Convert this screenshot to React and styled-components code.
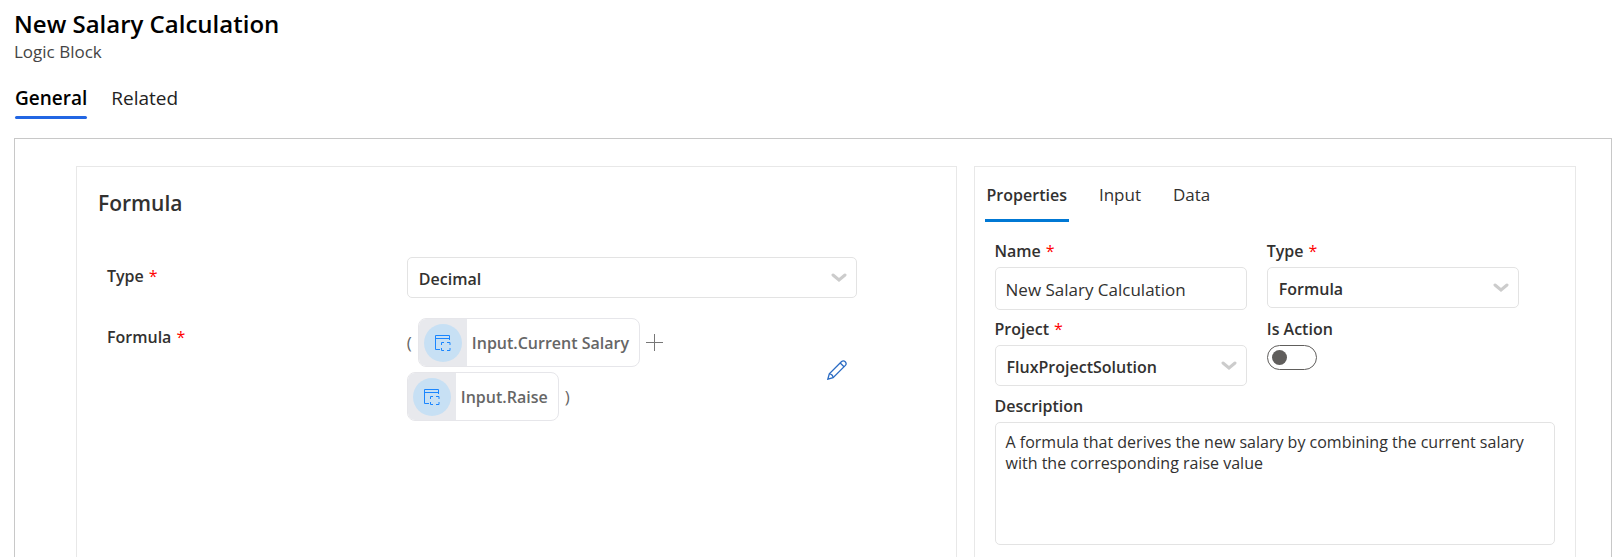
import React, { useState } from "react";
import styled, { createGlobalStyle } from "styled-components";

const GlobalStyle = createGlobalStyle`
  * {
    box-sizing: border-box;
  }

  body {
    margin: 0;
    background: #fff;
    color: #323130;
    font-family: "Segoe UI", "Open Sans", "Noto Sans", sans-serif;
    font-size: 17px;
    line-height: 22px;
  }

  button, input, select, textarea {
    font: inherit;
    color: inherit;
  }
`;

const Page = styled.div`
  display: flex;
  flex-direction: column;
  min-height: 100vh;
  padding: 8px 9px 0 14px;
`;

const Title = styled.h1`
  margin: 0;
  color: #000;
  font-size: 24px;
  font-weight: 600;
  line-height: 32px;
`;

const SubTitle = styled.p`
  margin: 0;
  color: #444;
  line-height: 24px;
`;

const PageTabs = styled.nav`
  display: flex;
  gap: 24px;
  margin: 21px 0 19px 1px;
`;

const PageTab = styled.button`
  padding: 0;
  border: 0;
  background: none;
  color: ${p => (p.$active ? "#000" : "#222")};
  font-size: 19px;
  font-weight: ${p => (p.$active ? 600 : 400)};
  line-height: 26px;
  cursor: pointer;

  &::after {
    content: "";
    display: block;
    height: 3px;
    margin-top: 5px;
    border-radius: 2px;
    background: ${p => (p.$active ? "#2266e3" : "transparent")};
  }
`;

const Frame = styled.main`
  display: grid;
  grid-template-columns: minmax(0, 19fr) minmax(0, 13fr);
  gap: 17px;
  flex: 1;
  padding: 27px 35px 0 61px;
  border: 1px solid #c8c8c8;
  border-bottom: 0;
`;

const Panel = styled.section`
  border: 1px solid #e8e8e8;
  border-bottom: 0;
`;

const FormulaPanel = styled(Panel)`
  padding: 22px 99px 0 30px;
`;

const PanelTitle = styled.h2`
  margin: 0 0 40px -9px;
  font-size: 21px;
  font-weight: 600;
  line-height: 28px;
`;

const FormulaRow = styled.div`
  display: grid;
  grid-template-columns: 2fr 3fr;
  margin-bottom: 20px;
`;

const RowLabel = styled.label`
  padding-top: 8px;
  font-size: 16px;
  font-weight: 600;
`;

const Label = styled.label`
  display: block;
  margin-bottom: 5px;
  font-size: 16px;
  font-weight: 600;
`;

const Star = styled.span`
  margin-left: 5px;
  color: #f00;
  font-weight: 400;
`;

const SelectBox = styled.div`
  position: relative;

  svg {
    position: absolute;
    top: 15px;
    right: 10px;
    pointer-events: none;
  }
`;

const StyledSelect = styled.select`
  display: block;
  width: 100%;
  height: 41px;
  padding: 2px 36px 0 11px;
  border: 1px solid #e3e3e3;
  border-radius: 5px;
  background: #fff;
  font-size: 16px;
  font-weight: 600;
  appearance: none;
`;

const TextInput = styled.input`
  display: block;
  width: 100%;
  height: 43px;
  padding: 2px 10px 0;
  border: 1px solid #e3e3e3;
  border-radius: 5px;
`;

const TextArea = styled.textarea`
  display: block;
  width: 100%;
  height: 123px;
  padding: 9px 10px;
  border: 1px solid #e3e3e3;
  border-radius: 5px;
  font-size: 16px;
  line-height: 21px;
  resize: none;
`;

const FormulaValue = styled.div`
  display: flex;
  align-items: center;
  justify-content: space-between;
`;

const Expression = styled.div`
  display: flex;
  flex-wrap: wrap;
  align-items: center;
  gap: 5px 6px;
  max-width: 320px;
  color: #666;
`;

const Chip = styled.span`
  display: flex;
  align-items: center;
  height: 49px;
  padding-right: 10px;
  overflow: hidden;
  border: 1px solid #e6e6ea;
  border-radius: 8px;
  color: #666;
  font-size: 16px;
  font-weight: 600;
`;

const ChipIcon = styled.span`
  display: flex;
  align-items: center;
  justify-content: center;
  width: 48px;
  height: 100%;
  margin-right: 5px;
  background: #e8e9ed;
`;

const Circle = styled.span`
  display: flex;
  align-items: center;
  justify-content: center;
  width: 38px;
  height: 38px;
  border-radius: 50%;
  background: #c7e0f4;
`;

const EditButton = styled.button`
  display: flex;
  padding: 10px;
  border: 0;
  background: none;
  cursor: pointer;
`;

const PropertyTabs = styled.nav`
  display: flex;
  gap: 28px;
  padding: 13px 10px 0;
`;

const PropertyTab = styled.button`
  padding: 4px 2px 13px;
  border: 0;
  border-bottom: 3px solid ${p => (p.$active ? "#0078d4" : "transparent")};
  background: none;
  font-size: ${p => (p.$active ? "16px" : "17px")};
  font-weight: ${p => (p.$active ? 600 : 400)};
  cursor: pointer;
`;

const PropertyForm = styled.form`
  padding: 18px 20px 0;
`;

const FieldGrid = styled.div`
  display: grid;
  grid-template-columns: 1fr 1fr;
  column-gap: 20px;
  row-gap: 8px;
  padding-right: 36px;
  margin-bottom: 9px;
`;

const Toggle = styled.input`
  display: flex;
  align-items: center;
  width: 50px;
  height: 25px;
  margin: 0;
  padding: 0 4px;
  border: 1px solid #605e5c;
  border-radius: 13px;
  background: #fff;
  appearance: none;

  &::before {
    content: "";
    width: 15px;
    height: 15px;
    border-radius: 50%;
    background: #605e5c;
  }

  &:checked {
    justify-content: flex-end;
  }
`;

function Chevron() {
  return (
    <svg width="16" height="11" viewBox="0 0 16 11" fill="none">
      <path d="M2 3l6 5 6-5" stroke="#ccc" strokeWidth="3" strokeLinecap="round" />
    </svg>
  );
}

function InputIcon() {
  return (
    <svg width="16" height="16" viewBox="0 0 16 16" fill="none" stroke="#1a86ff">
      <path d="M5 14.5H.5V.5h14V5M.5 3.5h14" />
      <path d="M6.5 10V7.5H9M12 7.5h3V10M15 13v2.5h-3M9 15.5H6.500V13" />
    </svg>
  );
}

function PlusIcon() {
  return (
    <svg width="17" height="17" viewBox="0 0 17 17" stroke="#777">
      <path d="M8.5 0v17M0 8.5h17" />
    </svg>
  );
}

function PencilIcon() {
  return (
    <svg width="20" height="20" viewBox="0 0 20 20" fill="none" stroke="#2b6cc4" strokeWidth="1.3">
      <path d="M.8 19.2l1.500-5.300L14.600 1.600a2.700 2.700 0 0 1 3.800 3.800L6.100 17.700z" />
      <path d="M2.300 13.900c2 .2 3.600 1.800 3.800 3.800M13.200 3l3.800 3.800" />
    </svg>
  );
}

function Select({ id, options }) {
  return (
    <SelectBox>
      <StyledSelect id={id}>
        {options.map(option => (
          <option key={option}>{option}</option>
        ))}
      </StyledSelect>
      <Chevron />
    </SelectBox>
  );
}

function Token({ children }) {
  return (
    <Chip>
      <ChipIcon>
        <Circle>
          <InputIcon />
        </Circle>
      </ChipIcon>
      {children}
    </Chip>
  );
}

function FormulaEditor() {
  return (
    <FormulaPanel>
      <PanelTitle>Formula</PanelTitle>
      <FormulaRow>
        <RowLabel htmlFor="result-type">
          Type<Star>*</Star>
        </RowLabel>
        <Select id="result-type" options={["Decimal"]} />
      </FormulaRow>
      <FormulaRow>
        <RowLabel as="div">
          Formula<Star>*</Star>
        </RowLabel>
        <FormulaValue>
          <Expression>
            <span>(</span>
            <Token>Input.Current Salary</Token>
            <PlusIcon />
            <Token>Input.Raise</Token>
            <span>)</span>
          </Expression>
          <EditButton type="button" aria-label="Edit formula">
            <PencilIcon />
          </EditButton>
        </FormulaValue>
      </FormulaRow>
    </FormulaPanel>
  );
}

function Properties() {
  const [tab, setTab] = useState("Properties");

  return (
    <Panel>
      <PropertyTabs>
        {["Properties", "Input", "Data"].map(name => (
          <PropertyTab key={name} $active={tab === name} onClick={() => setTab(name)}>
            {name}
          </PropertyTab>
        ))}
      </PropertyTabs>
      <PropertyForm>
        <FieldGrid>
          <div>
            <Label htmlFor="name">
              Name<Star>*</Star>
            </Label>
            <TextInput id="name" defaultValue="New Salary Calculation" />
          </div>
          <div>
            <Label htmlFor="type">
              Type<Star>*</Star>
            </Label>
            <Select id="type" options={["Formula"]} />
          </div>
          <div>
            <Label htmlFor="project">
              Project<Star>*</Star>
            </Label>
            <Select id="project" options={["FluxProjectSolution"]} />
          </div>
          <div>
            <Label htmlFor="is-action">Is Action</Label>
            <Toggle id="is-action" type="checkbox" role="switch" />
          </div>
        </FieldGrid>
        <Label htmlFor="description">Description</Label>
        <TextArea
          id="description"
          defaultValue="A formula that derives the new salary by combining the current salary with the corresponding raise value"
        />
      </PropertyForm>
    </Panel>
  );
}

export default function App() {
  const [tab, setTab] = useState("General");

  return (
    <>
      <GlobalStyle />
      <Page>
        <Title>New Salary Calculation</Title>
        <SubTitle>Logic Block</SubTitle>
        <PageTabs>
          {["General", "Related"].map(name => (
            <PageTab key={name} $active={tab === name} onClick={() => setTab(name)}>
              {name}
            </PageTab>
          ))}
        </PageTabs>
        <Frame>
          <FormulaEditor />
          <Properties />
        </Frame>
      </Page>
    </>
  );
}
